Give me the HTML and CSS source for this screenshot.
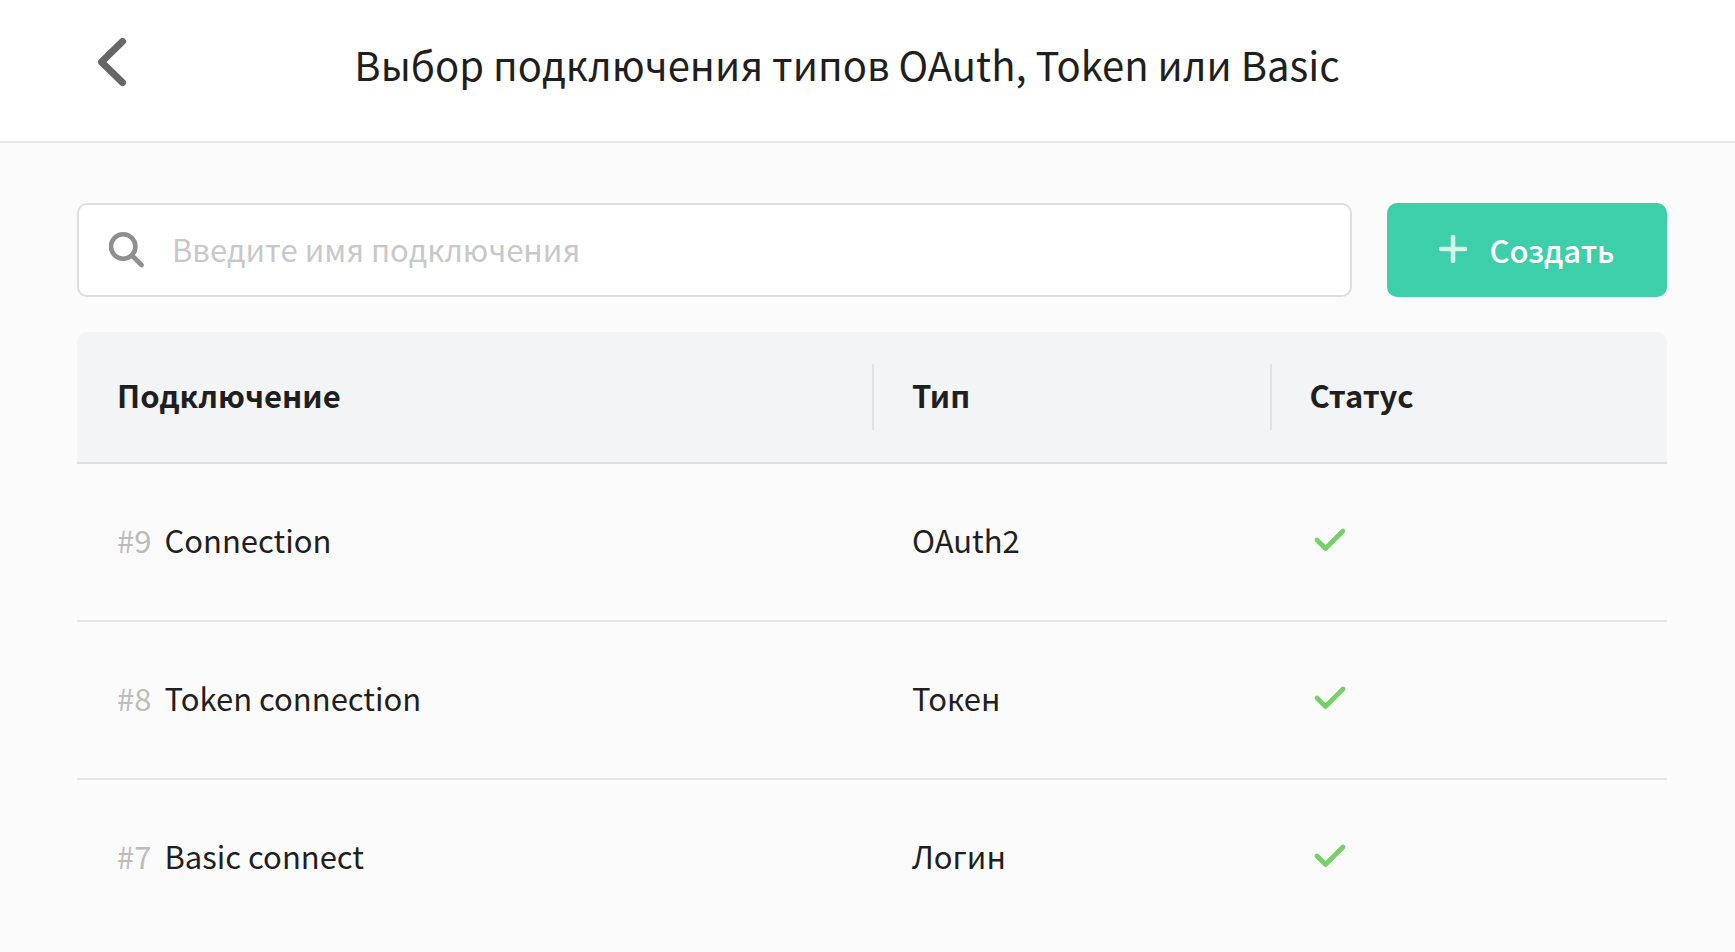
FILE: index.html
```html
<!DOCTYPE html>
<html lang="ru">
<head>
    <meta charset="UTF-8">
    <meta name="viewport" content="width=device-width, initial-scale=1.0">
    <title>Выбор подключения</title>
    <link rel="stylesheet" href="styles.css">
</head>
<body>
    <header class="page-header">
        <button type="button" class="back-btn" aria-label="Назад">
            <svg width="32" height="50" viewBox="0 0 32 50" fill="none" stroke="#666" stroke-width="7" stroke-linecap="round" stroke-linejoin="round">
                <path d="M26.5 4.5 5.500 25l21 20.500"/>
            </svg>
        </button>
        <h1>Выбор подключения типов OAuth, Token или Basic</h1>
    </header>

    <main class="content">
        <!-- Search and create -->
        <div class="toolbar">
            <label class="search">
                <svg width="38" height="38" viewBox="0 0 38 38" fill="none" stroke="#8f8f8f" stroke-width="4.6" stroke-linecap="round">
                    <circle cx="14.2" cy="15.5" r="12.2"/>
                    <path d="m23.5 25 9 9"/>
                </svg>
                <input type="text" placeholder="Введите имя подключения" aria-label="Имя подключения">
            </label>
            <button type="button" class="create-btn">
                <svg width="30" height="30" viewBox="0 0 30 30" fill="none" stroke="#d8f5ec" stroke-width="4.6" stroke-linecap="round">
                    <path d="M15 3v24M3 15h24"/>
                </svg>
                <span>Создать</span>
            </button>
        </div>

        <!-- Connections table -->
        <table class="connections">
            <thead>
                <tr>
                    <th class="col-name"><span>Подключение</span></th>
                    <th class="col-type"><span>Тип</span></th>
                    <th class="col-status"><span>Статус</span></th>
                </tr>
            </thead>
            <tbody>
                <tr>
                    <td><span class="number">#9</span>Connection</td>
                    <td>OAuth2</td>
                    <td><svg class="check" width="40" height="24" viewBox="0 0 40 24" role="img" aria-label="Активно"><path d="m7 13 8.5 8.5L33 4"/></svg></td>
                </tr>
                <tr>
                    <td><span class="number">#8</span>Token connection</td>
                    <td>Токен</td>
                    <td><svg class="check" width="40" height="24" viewBox="0 0 40 24" role="img" aria-label="Активно"><path d="m7 13 8.5 8.5L33 4"/></svg></td>
                </tr>
                <tr>
                    <td><span class="number">#7</span>Basic connect</td>
                    <td>Логин</td>
                    <td><svg class="check" width="40" height="24" viewBox="0 0 40 24" role="img" aria-label="Активно"><path d="m7 13 8.5 8.5L33 4"/></svg></td>
                </tr>
            </tbody>
        </table>
    </main>
</body>
</html>
```
FILE: styles.css
```css
* {
    box-sizing: border-box;
}

body {
    margin: 0;
    background: #fbfbfb;
    color: #1f1f1f;
    font-family: "Noto Sans CJK SC", "Noto Sans", sans-serif;
    font-size: 31px;
}

.page-header {
    display: flex;
    align-items: center;
    height: 143px;
    padding: 0 169px 18px 96px;
    background: #fff;
    border-bottom: 2px solid #e5e5e5;
}

.back-btn {
    display: flex;
    padding: 0;
    background: none;
    border: none;
    cursor: pointer;
}

h1 {
    flex: 1;
    margin: 0;
    padding-top: 4px;
    font-size: 40px;
    font-weight: 400;
    line-height: 60px;
    text-align: center;
}

.content {
    padding: 60px 68px 0 77px;
}

.toolbar {
    display: flex;
    gap: 35px;
    margin-bottom: 35px;
}

.search {
    display: flex;
    flex: 1;
    align-items: center;
    gap: 25px;
    height: 94px;
    padding: 0 30px;
    background: #fff;
    border: 2px solid #dedede;
    border-radius: 10px;
}

.search input {
    flex: 1;
    min-width: 0;
    padding: 0 0 4px;
    border: none;
    outline: none;
    background: none;
    color: inherit;
    font: inherit;
}

.search input::placeholder {
    color: #c8c8c8;
}

.create-btn {
    display: flex;
    align-items: center;
    justify-content: center;
    gap: 22px;
    width: 280px;
    padding: 0 2px 2px 0;
    background: #3dcfa9;
    border: none;
    border-radius: 10px;
    color: #fff;
    font: inherit;
    font-weight: 500;
    cursor: pointer;
}

.connections {
    width: 100%;
    border-spacing: 0;
    table-layout: fixed;
}

.connections th {
    height: 132px;
    padding: 0;
    background: #f3f4f6;
    border-bottom: 2px solid #dcdee0;
    font-weight: 700;
    text-align: left;
}

.connections th:first-child {
    border-top-left-radius: 10px;
}

.connections th:last-child {
    border-top-right-radius: 10px;
}

.connections th span {
    display: block;
    height: 66px;
    padding-left: 38px;
    border-left: 2px solid transparent;
    line-height: 62px;
}

.connections th + th span {
    border-left-color: #e1e2e4;
}

.connections td {
    height: 158px;
    padding: 0 40px 6px;
    border-bottom: 2px solid #e4e4e4;
}

.connections tbody tr:last-child td {
    border-bottom-color: transparent;
}

.col-name {
    width: 50%;
}

.col-type {
    width: 25%;
}

.number {
    margin-right: 13px;
    color: #bcbcbc;
}

.check {
    display: block;
    fill: none;
    stroke: #76cf68;
    stroke-width: 4.6;
    stroke-linecap: round;
    stroke-linejoin: round;
}
```
